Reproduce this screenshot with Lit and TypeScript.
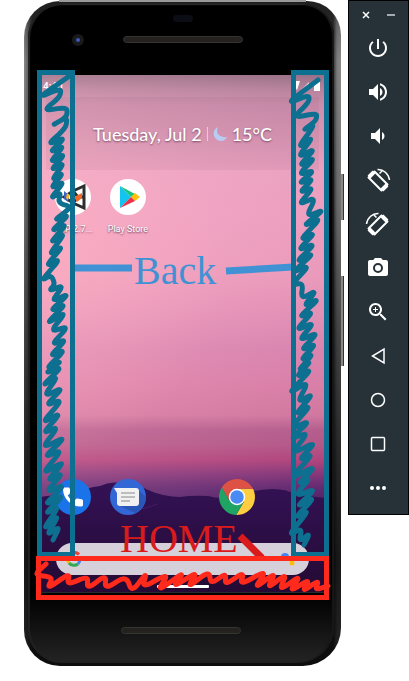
import { LitElement, html, css, svg } from "lit";
import { customElement } from "lit/decorators.js";

type Point = [number, number];

// Turns zigzag vertices into a smooth hand-drawn stroke.
const scribble = (points: Point[]): string => {
  let d = `M${points[0][0]} ${points[0][1]}`;
  for (let i = 1; i < points.length - 1; i++) {
    const [x, y] = points[i];
    const [px, py] = points[i - 1];
    const [nx, ny] = points[i + 1];
    const ax = x + (px - x) * 0.4;
    const ay = y + (py - y) * 0.4;
    const bx = x + (nx - x) * 0.4;
    const by = y + (ny - y) * 0.4;
    d += `L${ax.toFixed(1)} ${ay.toFixed(1)}Q${x} ${y} ${bx.toFixed(1)} ${by.toFixed(1)}`;
  }
  const last = points[points.length - 1];
  return `${d}L${last[0]} ${last[1]}`;
};

const LEFT: Point[] = [
  [68, 77], [38, 98], [61, 88], [60, 97], [43, 111], [67, 107], [67, 117], [51, 126], [67, 117],
  [66, 128], [47, 145], [66, 137], [49, 153], [65, 145], [49, 163], [66, 153],
  [50, 171], [65, 162], [51, 181], [64, 172], [50, 189], [65, 181], [50, 199], [61, 192], [58, 203],
  [72, 207], [53, 221], [70, 214], [50, 232], [68, 223], [49, 244], [66, 232], [48, 256], [64, 245],
  [45, 267], [61, 258], [41, 281], [51, 275], [55, 284], [49, 291], [64, 285], [51, 302], [70, 293],
  [49, 312], [67, 303], [45, 325], [67, 311], [50, 332], [69, 326], [51, 345], [67, 339], [49, 357],
  [66, 349], [45, 370], [63, 360], [44, 374], [63, 366], [41, 387], [59, 375], [43, 397], [64, 387],
  [45, 406], [63, 399], [41, 424], [62, 412], [42, 434], [59, 426], [41, 449], [67, 436], [43, 458],
  [63, 449], [41, 475], [66, 460], [46, 482], [64, 472], [45, 493], [66, 484], [43, 506], [65, 494],
  [44, 515], [60, 505], [42, 531], [60, 514], [46, 536], [60, 526], [53, 540],
];

const RIGHT: Point[] = [
  [318, 80], [286, 104], [309, 95], [309, 102], [293, 118], [317, 113], [316, 121], [302, 131],
  [316, 123], [297, 149], [314, 136], [297, 158], [316, 148], [298, 167], [316, 157], [298, 175],
  [315, 170], [298, 184], [314, 178], [299, 193], [314, 187], [298, 205], [316, 197], [306, 217],
  [325, 209], [302, 227], [322, 217], [299, 241], [316, 232], [297, 251], [316, 243], [295, 263],
  [315, 252], [292, 273], [310, 265], [291, 285], [303, 283], [301, 299], [317, 290], [303, 307],
  [320, 298], [298, 318], [314, 311], [295, 331], [315, 322], [298, 341], [319, 332], [300, 351],
  [317, 343], [300, 361], [314, 353], [297, 372], [312, 360], [295, 378], [313, 368], [287, 395],
  [309, 381], [297, 403], [314, 393], [294, 416], [312, 404], [289, 430], [311, 420], [289, 440],
  [309, 432], [290, 455], [317, 441], [298, 461], [314, 453], [289, 480], [317, 465], [297, 485],
  [311, 477], [294, 497], [317, 488], [295, 508], [316, 496], [294, 519], [310, 509], [288, 536],
  [302, 528], [299, 542], [310, 533], [304, 545],
];

const BOTTOM: Point[] = [
  [46, 564], [34, 575], [53, 577], [47, 589], [70, 573], [67, 585], [88, 576], [87, 589], [106, 575],
  [105, 589], [126, 576], [132, 592], [147, 572], [142, 588], [169, 573], [157, 592], [185, 571],
  [172, 588], [198, 571], [187, 588], [209, 571], [211, 584], [226, 573], [225, 585], [244, 572],
  [240, 585], [267, 570], [254, 589], [276, 572], [267, 589], [287, 573], [279, 591], [301, 575],
  [289, 592], [310, 579], [302, 592], [319, 580], [315, 590], [328, 586],
];

const ICONS = {
  power: svg`<path d="M13 3h-2v10h2V3zm4.83 2.17l-1.42 1.42C17.99 7.86 19 9.81 19 12c0 3.87-3.13 7-7 7s-7-3.13-7-7c0-2.19 1.01-4.14 2.58-5.42L6.17 5.17C4.23 6.82 3 9.26 3 12c0 4.97 4.03 9 9 9s9-4.03 9-9c0-2.74-1.23-5.18-3.17-6.83z"/>`,
  volumeUp: svg`<path d="M3 9v6h4l5 5V4L7 9H3zm13.5 3c0-1.77-1.02-3.29-2.5-4.03v8.05c1.48-.73 2.5-2.25 2.5-4.02zM14 3.23v2.06c2.89.86 5 3.54 5 6.71s-2.11 5.85-5 6.71v2.06c4.01-.91 7-4.49 7-8.77s-2.99-7.86-7-8.77z"/>`,
  volumeDown: svg`<path d="M18.5 12c0-1.77-1.02-3.29-2.5-4.03v8.05c1.48-.73 2.5-2.25 2.5-4.02zM5 9v6h4l5 5V4L9 9H5z"/>`,
  rotateLeft: svg`<g fill="none" stroke="#fff" stroke-linejoin="round"><path d="M2.500 9.500 8.500 3.500 21.500 16.500 15.500 22.500Z" stroke-width="2"/><path d="M3 9 8 4M16 22 21 17" stroke-width="4"/><path d="M11.500 1.500c6-.3 11 4 12 10.500" stroke-width="1.500"/><path d="M16 3l-2.500 2.500" stroke-width="1.500"/></g>`,
  rotateRight: svg`<g fill="none" stroke="#fff" stroke-linejoin="round"><path d="M21.500 9.500 15.500 3.500 2.500 16.500 8.500 22.500Z" stroke-width="2"/><path d="M21 9 16 4M8 22 3 17" stroke-width="4"/><path d="M12.500 1.500c-6-.3-11 4-12 10.500" stroke-width="1.500"/><path d="M8 3l2.500 2.500" stroke-width="1.500"/></g>`,
  camera: svg`<path d="M9 2L7.170 4H4c-1.100 0-2 .9-2 2v12c0 1.100.9 2 2 2h16c1.100 0 2-.9 2-2V6c0-1.100-.9-2-2-2h-3.170L15 2H9z"/><circle cx="12" cy="12" r="4" fill="none" stroke="#263238" stroke-width="2"/>`,
  zoom: svg`<path d="M15.500 14h-.79l-.28-.27C15.410 12.590 16 11.110 16 9.500 16 5.910 13.090 3 9.500 3S3 5.910 3 9.500 5.910 16 9.500 16c1.610 0 3.090-.59 4.230-1.570l.27.28v.79l5 4.990L20.490 19l-4.990-5zm-6 0C7.010 14 5 11.990 5 9.500S7.010 5 9.500 5 14 7.010 14 9.500 11.990 14 9.500 14zm2.500-4h-2v2H9v-2H7V9h2V7h1v2h2v1z"/>`,
  back: svg`<path d="M18 5v14L6.500 12z" fill="none" stroke="#fff" stroke-width="1.500"/>`,
  home: svg`<circle cx="12" cy="12" r="6.500" fill="none" stroke="#fff" stroke-width="1.500"/>`,
  overview: svg`<rect x="5.500" y="5.500" width="13" height="13" rx="1" fill="none" stroke="#fff" stroke-width="1.500"/>`,
  more: svg`<circle cx="6" cy="12" r="2"/><circle cx="12" cy="12" r="2"/><circle cx="18" cy="12" r="2"/>`,
};

@customElement("emulator-toolbar")
export class EmulatorToolbar extends LitElement {
  static styles = css`
    :host {
      display: block;
      box-sizing: border-box;
      background: #263238;
      border: 1px solid #000;
      padding-bottom: 4px;
    }
    .bar {
      display: flex;
      flex-direction: column;
      align-items: center;
    }
    .window {
      display: flex;
      width: 100%;
      justify-content: space-around;
      padding: 6px 4px 3px 4px;
      box-sizing: border-box;
    }
    button {
      display: flex;
      align-items: center;
      justify-content: center;
      border: 0;
      padding: 0;
      background: none;
      cursor: pointer;
    }
    .small {
      width: 16px;
      height: 16px;
    }
    .tool {
      width: 46px;
      height: 44px;
      padding-right: 2px;
    }
    svg {
      display: block;
      fill: #fff;
      overflow: visible;
    }
  `;

  render() {
    const tools: [string, unknown][] = [
      ["Power", ICONS.power],
      ["Volume up", ICONS.volumeUp],
      ["Volume down", ICONS.volumeDown],
      ["Rotate left", ICONS.rotateLeft],
      ["Rotate right", ICONS.rotateRight],
      ["Take screenshot", ICONS.camera],
      ["Zoom", ICONS.zoom],
      ["Back", ICONS.back],
      ["Home", ICONS.home],
      ["Overview", ICONS.overview],
      ["More", ICONS.more],
    ];
    return html`
      <div class="bar">
        <div class="window">
          <button class="small" aria-label="Close">
            <svg width="16" height="16" viewBox="0 0 16 16"><path d="M5 5l6 6M11 5l-6 6" stroke="#fff" stroke-width="1.500" /></svg>
          </button>
          <button class="small" aria-label="Minimize">
            <svg width="16" height="16" viewBox="0 0 16 16"><path d="M4 8h8" stroke="#a5abae" stroke-width="2" /></svg>
          </button>
        </div>
        ${tools.map(
          ([label, icon]) => html`<button class="tool" aria-label=${label}>
            <svg width="24" height="24" viewBox="0 0 24 24">${icon}</svg>
          </button>`
        )}
      </div>
    `;
  }
}

@customElement("phone-home")
export class PhoneHome extends LitElement {
  static styles = css`
    :host {
      display: flex;
      flex-direction: column;
      position: relative;
      min-height: 517px;
      font-family: Roboto, "Liberation Sans", sans-serif;
      color: #fff;
      background: linear-gradient(
        #9c758a 0, #bb87a0 14px, #d294b2 30px, #df9dba 60px, #f2a8c6 95px, #f5a6c5 140px,
        #f2a1c0 200px, #ea98bc 235px, #df8ab4 275px, #e084ac 310px, #d87da4 340px,
        #b96291 355px, #b85b8b 370px, #b5477f 385px, #8c3a7c 398px, #652b73 412px, #54246a 425px);
    }
    .shade {
      position: absolute;
      inset: 0;
      background:
        radial-gradient(circle at 0 190px, rgba(255, 178, 190, 0.4), rgba(255, 178, 190, 0) 190px),
        linear-gradient(90deg, rgba(255, 190, 205, 0.18), rgba(80, 20, 80, 0.05));
    }
    .hills {
      position: absolute;
      left: 0;
      bottom: 0;
      width: 100%;
      height: 112px;
    }
    .status, .widget, .apps, .dock, .search, .nav {
      position: relative;
    }
    .status {
      display: flex;
      align-items: center;
      justify-content: space-between;
      height: 22px;
      padding: 0 3px;
      box-sizing: border-box;
      font-size: 10px;
      font-weight: 500;
    }
    .widget {
      display: flex;
      align-items: center;
      justify-content: center;
      gap: 5px;
      height: 73px;
      margin: 0 6px;
      background: rgba(110, 60, 90, 0.08);
      font: 500 18px/20px Lato, "Open Sans", sans-serif;
      white-space: nowrap;
      text-shadow: 0 1px 2px rgba(60, 20, 50, 0.6);
    }
    .rule {
      width: 1px;
      height: 14px;
      background: rgba(255, 255, 255, 0.5);
    }
    .apps, .dock {
      display: grid;
      grid-template-columns: repeat(5, 1fr);
      padding: 0 6px;
    }
    .apps {
      margin-top: 9px;
    }
    .dock {
      margin-top: auto;
    }
    .app {
      display: flex;
      flex-direction: column;
      align-items: center;
      gap: 8px;
      min-width: 0;
      border: 0;
      padding: 0;
      background: none;
      color: #fff;
      font: 9px/12px Roboto, "Liberation Sans", sans-serif;
      white-space: nowrap;
      text-shadow: 0 1px 2px rgba(60, 20, 50, 0.8);
    }
    .chrome {
      grid-column: 4;
    }
    .app svg, .search svg {
      display: block;
    }
    .search {
      display: flex;
      align-items: center;
      justify-content: space-between;
      height: 32px;
      margin: 28px 16px 0;
      padding: 0 10px;
      border: 0;
      border-radius: 16px;
      background: #d6d0da;
    }
    .nav {
      display: flex;
      align-items: center;
      justify-content: center;
      height: 17px;
      padding-top: 6px;
      box-sizing: border-box;
    }
    .handle {
      width: 52px;
      height: 3px;
      border-radius: 1px;
      background: #fff;
    }
  `;

  render() {
    return html`
      <div class="shade"></div>
      <svg class="hills" viewBox="0 0 285 112" preserveAspectRatio="none">
        <defs>
          <linearGradient id="hill" x1="0" y1="0" x2="0" y2="1">
            <stop offset="0" stop-color="#331255" />
            <stop offset="1" stop-color="#240a34" />
          </linearGradient>
        </defs>
        <path fill="url(#hill)" d="M0 17Q20 14 32 15 44 8 60 6 70 1 80 3 96 3 108 10 124 17 140 17 152 15 168 16 182 20 196 16 212 10 232 9 248 9 256 15 270 16 285 18V112H0Z" />
        <path d="M82 34Q100 30 118 24" fill="none" stroke="#4b1a68" stroke-width="1" />
      </svg>

      <div class="status">
        <span>4:40</span>
        <svg width="28" height="10" viewBox="0 0 28 10" fill="#fff" aria-hidden="true">
          <path d="M0 0h6L3 9 0 5z" /><path d="M7 9 15 1v8z" opacity=".7" /><path d="M20 1h2V0h3v1h1v9h-6z" />
        </svg>
      </div>

      <div class="widget">
        <span>Tuesday, Jul 2</span>
        <span class="rule"></span>
        <svg width="14" height="16" viewBox="0 0 14 16" aria-hidden="true">
          <path d="M5 1C-2 4 0 15 8 15c3 0 5-2 6-4C7 12 2 8 5 1z" fill="#b8cdf2" />
        </svg>
        <span>15°C</span>
      </div>

      <div class="apps">
        <button class="app">
          <svg width="36" height="36" viewBox="0 0 36 36">
            <circle cx="18" cy="18" r="18" fill="#fff" />
            <path d="M29 7v22L18 24 9 18l9-6zM18 12v12M18 12l5 6-5 6M23 18h6" fill="none" stroke="#2e2e2e" stroke-width="3" />
            <path d="M9 12l5 4-1 7-4-3z" fill="#3a62c8" />
            <path d="M12 14l3 2-2 5-2-2z" fill="#f3b928" />
            <path d="M19 18l8-4v5l-5 4z" fill="#ee6a2a" />
          </svg>
          <span>USP 2.7...</span>
        </button>
        <button class="app">
          <svg width="36" height="36" viewBox="0 0 36 36">
            <circle cx="18" cy="18" r="18" fill="#fff" />
            <path d="M10 7v22l11-11z" fill="#12c4ee" />
            <path d="M10 7l15 8-4 3z" fill="#18c37d" />
            <path d="M25 14l5 4-5 4-4-4z" fill="#ffc107" />
            <path d="M10 29l15-7-4-4z" fill="#e8334a" />
          </svg>
          <span>Play Store</span>
        </button>
      </div>

      <div class="dock">
        <button class="app" aria-label="Phone">
          <svg width="36" height="36" viewBox="0 0 36 36">
            <circle cx="18" cy="18" r="18" fill="#1a73e8" />
            <path d="M9.500 8.500C8.500 8.500 8 9 8 10c0 9.500 8 17.500 17.500 17.500 1.500 0 2.500-.5 2.500-1.500v-4c0-1-.5-1.500-1.500-1.700l-4-.8c-.8 0-1 .1-1.500.6l-2.200 2.400c-2.600-1.400-4.600-3.400-6-6l2.300-2.300c.4-.4.6-.9.5-1.500l-.8-3c-.2-.9-.7-1.200-1.500-1.200z" fill="#fff" />
          </svg>
        </button>
        <button class="app" aria-label="Messages">
          <svg width="36" height="36" viewBox="0 0 36 36">
            <circle cx="18" cy="18" r="18" fill="#3367d6" />
            <path d="M28 11 36 18A18 18 0 0 1 25 34L10 27z" fill="#2a56b8" />
            <path d="M4 9h22q3 0 3 3v12q0 3-3 3H10q-3 0-3-3V14z" fill="#f1f1f1" />
            <path d="M11 14h14M11 18h14M11 22h9" stroke="#bdbdbd" stroke-width="2" />
          </svg>
        </button>
        <button class="app chrome" aria-label="Chrome">
          <svg width="36" height="36" viewBox="0 0 48 48">
            <path d="M45.300 13A24 24 0 0 1 22.900 47.950L33.530 29.500 24 13z" fill="#ffcd40" />
            <path d="M3.800 11.070A24 24 0 0 0 22.900 47.950L33.530 29.500H14.470z" fill="#1fa463" />
            <path d="M24 13H45.300A24 24 0 0 0 3.800 11.070L14.470 29.500z" fill="#de5246" />
            <circle cx="24" cy="24" r="11" fill="#fff" />
            <circle cx="24" cy="24" r="9" fill="#4a8af4" />
          </svg>
        </button>
      </div>

      <button class="search" aria-label="Google Search">
        <svg width="16" height="16" viewBox="0 0 16 16" fill="none" stroke-width="3">
          <path d="M3 4a6.500 6.500 0 0 1 10-.5" stroke="#ea4335" />
          <path d="M3 4a6.500 6.500 0 0 0 0 8" stroke="#fbbc05" />
          <path d="M3 12a6.500 6.500 0 0 0 9 1" stroke="#34a853" />
          <path d="M8 8h6q0 3-2 5" stroke="#4285f4" />
        </svg>
        <svg width="22" height="16" viewBox="0 0 22 16">
          <circle cx="8" cy="6" r="4" fill="#4285f4" /><circle cx="15" cy="12" r="2.500" fill="#fbbc05" />
        </svg>
      </button>
      <div class="nav"><span class="handle"></span></div>
    `;
  }
}

@customElement("app-root")
export class AppRoot extends LitElement {
  static styles = css`
    :host {
      display: flex;
      align-items: flex-start;
      min-height: 100vh;
      background: #fff;
    }
    .stage {
      flex: 1;
      min-width: 0;
      padding: 1px 7px 16px 24px;
    }
    emulator-toolbar {
      flex: none;
      width: 61px;
    }
    .phone {
      position: relative;
      padding: 3px 7px 3px 4px;
      border-radius: 36px 34px 38px 36px;
      background:
        linear-gradient(90deg, rgba(0, 0, 0, 0.1) 0, rgba(0, 0, 0, 0.3) 3px, rgba(0, 0, 0, 0.7) 8px, rgba(0, 0, 0, 0.7) calc(100% - 8px), rgba(0, 0, 0, 0.2) calc(100% - 4px), rgba(0, 0, 0, 0.1) 100%),
        linear-gradient(#6a6a6a 0, #9a9a9a 60px, #808080 200px, #505050 330px, #303030 450px, #1c1c1c 560px, #2c2c2c 100%);
    }
    .face {
      display: flex;
      flex-direction: column;
      padding: 0 9px 0 12px;
      border-radius: 34px 32px 36px 34px;
      background: linear-gradient(#000 0, #000 590px, #242424 100%);
      box-shadow: inset 2px 0 1px #222, inset -2px 0 1px #181818, inset 0 1px 1px #333;
    }
    .forehead {
      display: grid;
      grid-template-columns: 1fr 122px 1fr;
      grid-template-rows: 14px 19px;
      row-gap: 5px;
      align-items: center;
      justify-items: center;
      height: 71px;
      padding-top: 7px;
      box-sizing: border-box;
    }
    .sensor {
      grid-column: 2;
      width: 20px;
      height: 7px;
      border-radius: 4px;
      background: #0b0d14;
    }
    .camera {
      grid-column: 1;
      grid-row: 2;
      width: 4px;
      height: 4px;
      border: 4px solid #1a1a1e;
      border-radius: 50%;
      background: #4258b4;
      justify-self: start;
      margin-left: 32px;
    }
    .speaker {
      width: 118px;
      height: 5px;
      border: 1px solid #35342f;
      border-radius: 4px;
      background: #24221f;
    }
    .forehead .speaker {
      grid-column: 2;
      grid-row: 2;
    }
    .screen {
      position: relative;
    }
    .chin {
      display: flex;
      justify-content: center;
      padding: 34px 4px 29px 0;
      border-top: 1px solid #2a2a2a;
    }
    .key {
      position: absolute;
      left: 100%;
      width: 3px;
      border-right: 1px solid #333;
      box-sizing: border-box;
      background: #888;
    }
    .power {
      top: 173px;
      height: 46px;
    }
    .volume {
      top: 275px;
      height: 90px;
    }
    .slot {
      position: absolute;
      left: 0;
      top: -1px;
      width: 78%;
      margin-left: 11%;
      height: 2px;
      background: #999;
    }
    .band {
      position: absolute;
      top: -5px;
      width: 38px;
      height: 487px;
      border: 5px solid #0e7090;
      box-sizing: border-box;
    }
    .start {
      left: -3px;
    }
    .end {
      right: -4px;
    }
    .strip {
      position: absolute;
      left: -4px;
      right: -4px;
      bottom: -8px;
      height: 44px;
      border: 5px solid #ff2a1c;
      box-sizing: border-box;
    }
    .ink {
      position: absolute;
      inset: -5px;
      width: calc(100% + 10px);
      height: calc(100% + 10px);
      overflow: visible;
      fill: none;
      stroke-linecap: round;
      stroke-linejoin: round;
    }
    .note {
      position: absolute;
      display: flex;
      align-items: center;
      font: 40px/46px "Liberation Serif", serif;
    }
    .back {
      top: 173px;
      left: 32px;
      right: 32px;
      gap: 2px;
      color: #4192d4;
    }
    .lead {
      padding-bottom: 8px;
    }
    .trail {
      margin-left: auto;
      padding-bottom: 6px;
    }
    .home {
      top: 441px;
      left: 0;
      right: 0;
      padding-left: 80px;
      color: #d91b1b;
    }
    .note svg {
      display: block;
      overflow: visible;
    }
    .tail {
      padding-top: 14px;
    }
  `;

  render() {
    return html`
      <main class="stage">
        <div class="phone">
          <span class="slot"></span>
          <span class="key power"></span>
          <span class="key volume"></span>
          <div class="face">
            <div class="forehead">
              <span class="sensor"></span>
              <span class="camera"></span>
              <span class="speaker"></span>
            </div>
            <div class="screen">
              <phone-home></phone-home>
              <div class="note back">
                <svg class="lead" width="60" height="14"><path d="M0 8h60" stroke="#4192d4" stroke-width="7" /></svg>
                <span>Back</span>
                <svg class="trail" width="67" height="14"><path d="M0 10 67 6" stroke="#4192d4" stroke-width="7" /></svg>
              </div>
              <div class="note home">
                <span>HOME</span>
                <svg class="tail" width="24" height="24"><path d="M2 2 24 24" stroke="#d91b1b" stroke-width="7" /></svg>
              </div>
              <div class="band start">
                <svg class="ink" viewBox="37 70 38 487"><path d=${scribble(LEFT)} stroke="#0e7090" stroke-width="5" /></svg>
              </div>
              <div class="band end">
                <svg class="ink" viewBox="291 70 38 487"><path d=${scribble(RIGHT)} stroke="#0e7090" stroke-width="5" /></svg>
              </div>
              <div class="strip">
                <svg class="ink" viewBox="36 556 293 44" preserveAspectRatio="none"><path d=${scribble(BOTTOM)} stroke="#ff2a1c" stroke-width="5" /></svg>
              </div>
            </div>
            <div class="chin"><span class="speaker"></span></div>
          </div>
        </div>
      </main>
      <emulator-toolbar></emulator-toolbar>
    `;
  }
}
